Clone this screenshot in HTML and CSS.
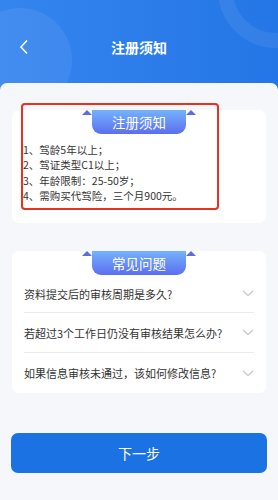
FILE: index.html
```html
<!DOCTYPE html>
<html lang="zh-CN">
<head>
  <meta charset="UTF-8">
  <meta name="viewport" content="width=device-width, initial-scale=1.0">
  <title>注册须知</title>
  <link rel="stylesheet" href="styles.css">
</head>
<body>

  <header class="topbar">
    <span class="deco deco_circle"></span>
    <span class="deco deco_ring"></span>
    <div class="topbar_row">
      <svg class="back" width="10" height="16" viewBox="0 0 10 16">
        <path d="M8 1.5 L2 8 L8 14.5" fill="none" stroke="#fff" stroke-width="1.6"/>
      </svg>
      <h1>注册须知</h1>
    </div>
  </header>

  <main class="panel">
    <section class="card card_notice">
      <div class="ribbon"><span>注册须知</span></div>
      <ol class="notice">
        <li>1、驾龄5年以上；</li>
        <li>2、驾证类型C1以上；</li>
        <li>3、年龄限制：25-50岁；</li>
        <li>4、需购买代驾险，三个月900元。</li>
      </ol>
      <div class="mark"></div>
    </section>

    <section class="card card_faq">
      <div class="ribbon"><span>常见问题</span></div>
      <ul class="faq">
        <li>
          <span>资料提交后的审核周期是多久?</span>
          <svg class="arrow" width="12" height="7" viewBox="0 0 12 7"><path d="M1 1 L6 5.5 L11 1" fill="none" stroke="#c4c4c4" stroke-width="1.1"/></svg>
        </li>
        <li>
          <span>若超过3个工作日仍没有审核结果怎么办?</span>
          <svg class="arrow" width="12" height="7" viewBox="0 0 12 7"><path d="M1 1 L6 5.5 L11 1" fill="none" stroke="#c4c4c4" stroke-width="1.1"/></svg>
        </li>
        <li>
          <span>如果信息审核未通过，该如何修改信息?</span>
          <svg class="arrow" width="12" height="7" viewBox="0 0 12 7"><path d="M1 1 L6 5.5 L11 1" fill="none" stroke="#c4c4c4" stroke-width="1.1"/></svg>
        </li>
      </ul>
    </section>

    <button class="next">下一步</button>
  </main>

</body>
</html>
```

FILE: styles.css
```css
* {
  box-sizing: border-box;
  font-family: "Noto Sans CJK SC", "Noto Sans", sans-serif;
}
body {
  margin: 0;
  background-color: #f5f7fb;
  overflow: hidden;
}
.topbar {
  position: relative;
  overflow: hidden;
  height: 90px;
  background: linear-gradient(90deg, #3585ef, #2476e6);
}
.deco {
  position: absolute;
  border-radius: 50%;
}
.deco_circle {
  left: -32px;
  top: 8px;
  width: 104px;
  height: 104px;
  background-color: rgba(255, 255, 255, 0.07);
}
.deco_ring {
  left: 218px;
  top: -68px;
  width: 116px;
  height: 116px;
  border: 15px solid rgba(255, 255, 255, 0.07);
}
.topbar_row {
  position: relative;
  display: flex;
  align-items: center;
  justify-content: center;
  height: 22px;
  margin-top: 36px;
}
.back {
  position: absolute;
  left: 19px;
  top: 3px;
}
.topbar_row h1 {
  margin: 0;
  color: #fff;
  font-size: 14px;
  font-weight: 700;
  line-height: 22px;
}
.panel {
  position: relative;
  margin-top: -7px;
  padding: 27px 12px 0 12px;
  background-color: #f5f7fb;
  border-radius: 7px 7px 0 0;
}
.card {
  position: relative;
  background-color: #fff;
  border-radius: 7px;
}
.ribbon {
  position: relative;
  width: 114px;
  height: 24px;
  margin: 0 auto;
}
.ribbon::before, .ribbon::after {
  content: "";
  position: absolute;
  top: 0;
  width: 0;
  height: 0;
  border-left: 5px solid transparent;
  border-right: 5px solid transparent;
  border-bottom: 5px solid #5a6ce8;
}
.ribbon::before { left: 0; }
.ribbon::after { right: 0; }
.ribbon span {
  display: block;
  margin: 0 10px;
  height: 24px;
  padding-top: 1px;
  background: linear-gradient(180deg, #74b3fb, #5c6ef0);
  border-radius: 0 0 9px 9px;
  color: #fff;
  font-size: 13.5px;
  line-height: 22px;
  text-align: center;
}
.card_notice {
  padding-bottom: 20px;
}
.notice {
  list-style: none;
  margin: 8px 0 0 0;
  padding: 0 0 0 11px;
  color: #333;
  font-size: 10.5px;
  line-height: 15.3px;
}
.mark {
  position: absolute;
  left: 9px;
  top: -7px;
  width: 198px;
  height: 107px;
  border: 2px solid #e8321e;
  border-radius: 4px;
}
.card_faq {
  margin-top: 28px;
}
.faq {
  list-style: none;
  margin: 0;
  padding: 0 12px;
}
.faq li {
  display: flex;
  align-items: center;
  justify-content: space-between;
  height: 40px;
  color: #333;
  font-size: 11px;
  border-bottom: 1px solid #ebebeb;
}
.faq li:first-child {
  height: 38px;
}
.faq li:last-child {
  border-bottom: 0;
}
.next {
  display: block;
  width: calc(100% + 2px);
  height: 40px;
  margin: 40px 0 0 -1px;
  border: 0;
  border-radius: 7px;
  background-color: #1b72e2;
  color: #fff;
  font-size: 14px;
}
```
